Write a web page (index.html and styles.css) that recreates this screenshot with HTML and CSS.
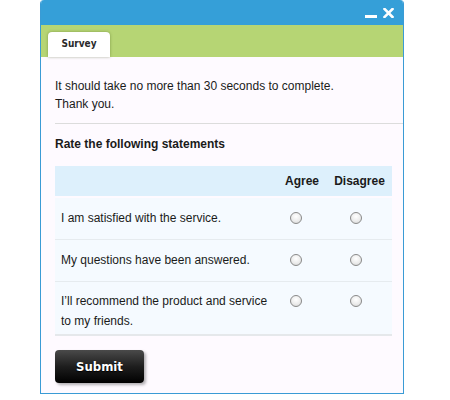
FILE: index.html
```html
<!DOCTYPE html>
<html lang="en">
<head>
  <meta charset="UTF-8">
  <title>Survey</title>
  <link rel="stylesheet" href="styles.css">
</head>
<body>

  <div class="window">
    <div class="titlebar">
      <span class="btn-min"></span>
      <svg class="btn-close" width="11" height="10" viewBox="0 0 11 10">
        <path d="M1.5 1 L9.5 9 M9.5 1 L1.5 9" stroke="#fff" stroke-width="2.6" stroke-linecap="square"/>
      </svg>
    </div>

    <div class="tabbar">
      <div class="tab">Survey</div>
    </div>

    <div class="content">
      <p class="intro">It should take no more than 30 seconds to complete.<br>Thank you.</p>
      <hr class="sep">
      <p class="heading">Rate the following statements</p>

      <table class="rates">
        <thead>
          <tr>
            <th class="q"></th>
            <th class="agree">Agree</th>
            <th class="disagree">Disagree</th>
          </tr>
        </thead>
        <tbody>
          <tr>
            <td class="q">I am satisfied with the service.</td>
            <td class="agree"><input type="radio" name="r1"></td>
            <td class="disagree"><input type="radio" name="r1"></td>
          </tr>
          <tr>
            <td class="q">My questions have been answered.</td>
            <td class="agree"><input type="radio" name="r2"></td>
            <td class="disagree"><input type="radio" name="r2"></td>
          </tr>
          <tr>
            <td class="q">I’ll recommend the product and service to my friends.</td>
            <td class="agree"><input type="radio" name="r3"></td>
            <td class="disagree"><input type="radio" name="r3"></td>
          </tr>
        </tbody>
      </table>

      <button class="submit">Submit</button>
    </div>
  </div>

</body>
</html>
```

FILE: styles.css
```css
body {
  margin: 0;
  font-family: "Liberation Sans", Arial, sans-serif;
  font-size: 12px;
  color: #1a1a1a;
  background: #fff;
}

.window {
  box-sizing: border-box;
  width: 364px;
  margin-left: 40px;
  border: 1px solid #3a9bd5;
  border-top: none;
  border-radius: 4px 4px 0 0;
  overflow: hidden;
  background: #fefaff;
}

.titlebar {
  height: 25px;
  background: #359fd8;
  display: flex;
  align-items: flex-start;
  justify-content: flex-end;
  padding-right: 9px;
}

.btn-min {
  width: 12px;
  height: 3px;
  margin-top: 15px;
  margin-right: 6px;
  background: #fff;
}

.btn-close {
  margin-top: 8px;
}

.tabbar {
  height: 32px;
  box-sizing: border-box;
  background: #b6d574;
  padding: 7px 0 0 7px;
  display: flex;
  align-items: flex-end;
}

.tab {
  width: 62px;
  height: 25px;
  box-sizing: border-box;
  padding-top: 6px;
  background: #fff;
  border-radius: 4px 4px 0 0;
  box-shadow: 0 0 3px rgba(60, 80, 20, 0.45);
  text-align: center;
  font-family: "DejaVu Sans Condensed", "DejaVu Sans", sans-serif;
  font-weight: bold;
  font-size: 10px;
  color: #2a2a2a;
}

.content {
  padding: 20px 11px 10px 14px;
}

.intro {
  margin: 0;
  line-height: 18px;
}

.sep {
  margin: 10px -11px 0 0;
  border: none;
  border-top: 1px solid #dcdcdc;
}

.heading {
  margin: 11px 0 0;
  line-height: 18px;
  font-weight: bold;
}

.rates {
  width: 100%;
  margin-top: 13px;
  border-collapse: collapse;
}

.rates th {
  height: 30px;
  padding: 0;
  background: #ddf0fc;
  border-bottom: 2px solid #fefaff;
  font-weight: bold;
  text-align: center;
}

.rates td {
  height: 28px;
  padding: 10px 0 3px;
  line-height: 20px;
  vertical-align: top;
  background: #f5faff;
  border-bottom: 1px solid #e6ebef;
}

.rates tr:last-child td {
  padding-top: 9px;
  border-bottom: 2px solid #e5e8eb;
}

.rates .q {
  width: 222px;
  padding-left: 6px;
  padding-right: 8px;
  box-sizing: border-box;
}

.rates td.agree { padding-left: 13px; width: 50px; box-sizing: border-box; }
.rates td.disagree { padding-left: 23px; }

input[type="radio"] {
  appearance: none;
  -webkit-appearance: none;
  width: 12px;
  height: 12px;
  margin: 4px 0 0;
  border: 1px solid #8a8a8a;
  border-radius: 50%;
  background: radial-gradient(circle at 50% 35%, #ffffff 0%, #ececec 55%, #d2d2d2 100%);
  display: block;
}

.submit {
  display: block;
  width: 89px;
  height: 33px;
  margin-top: 14px;
  border: none;
  border-radius: 4px;
  background: linear-gradient(#4a4a4a, #1e1e1e 50%, #000);
  box-shadow: 2px 2px 3px rgba(0, 0, 0, 0.3);
  color: #fff;
  font-family: "DejaVu Sans Condensed", "DejaVu Sans", sans-serif;
  font-weight: bold;
  font-size: 13px;
  text-shadow: 0 1px 1px #000;
  cursor: pointer;
}
```
